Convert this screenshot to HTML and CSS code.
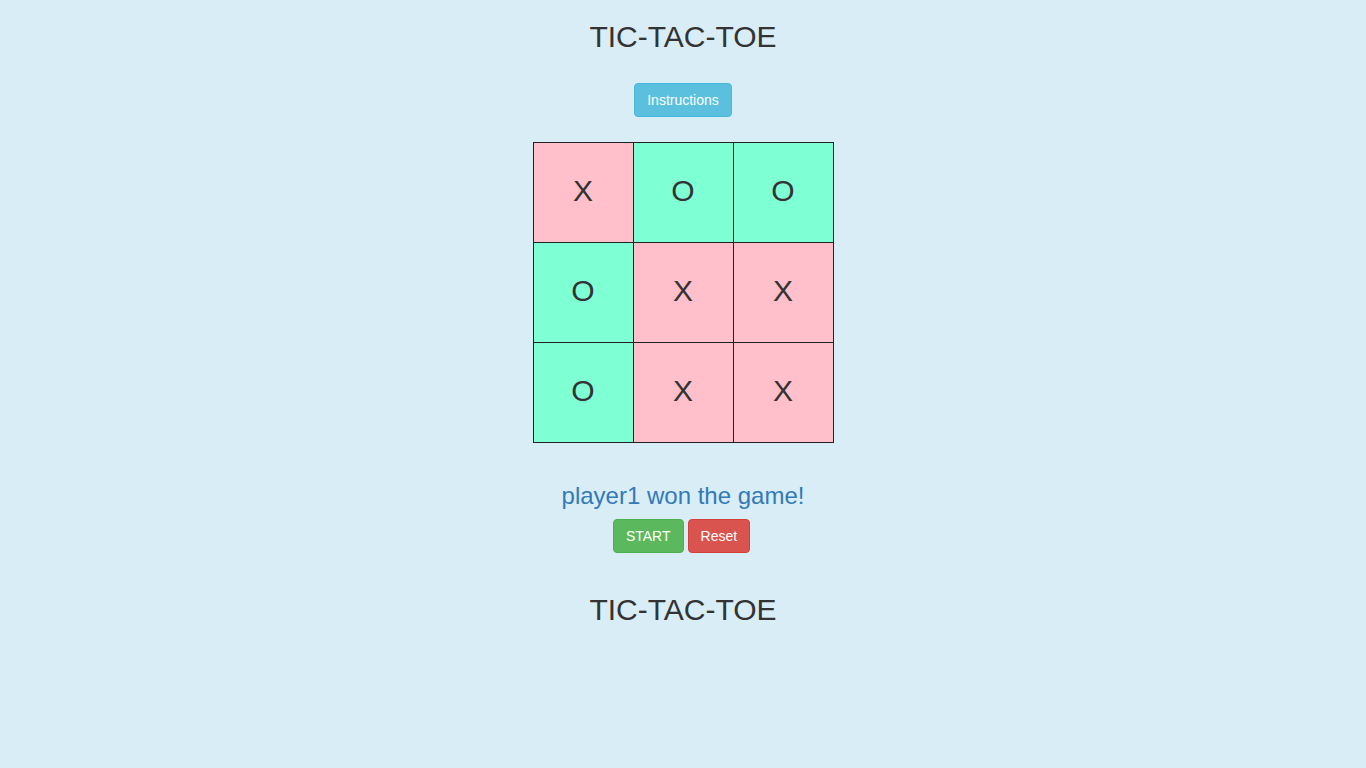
FILE: index.html
```html
<!DOCTYPE html>
<html>
<head>
<meta charset="utf-8">
<link rel="stylesheet" href="styles.css">
</head>
<body>
<div class="page">
  <h2 class="title">TIC-TAC-TOE</h2>
  <button class="btn btn-info">Instructions</button>
  <div class="board">
    <div class="cell x">X</div>
    <div class="cell o">O</div>
    <div class="cell o">O</div>
    <div class="cell o">O</div>
    <div class="cell x">X</div>
    <div class="cell x">X</div>
    <div class="cell o">O</div>
    <div class="cell x">X</div>
    <div class="cell x">X</div>
  </div>
  <h3 class="status">player1 won the game!</h3>
  <div class="actions">
    <button class="btn btn-success">START</button>
    <button class="btn btn-danger">Reset</button>
  </div>
  <h2 class="title title-bottom">TIC-TAC-TOE</h2>
</div>
</body>
</html>
```

FILE: styles.css
```css
html, body {
  margin: 0;
  padding: 0;
  background: #d9edf7;
  font-family: "Liberation Sans", Arial, sans-serif;
  font-size: 14px;
  color: #333;
  min-height: 768px;
}
.page {
  display: flex;
  flex-direction: column;
  align-items: center;
}
.title {
  font-size: 30px;
  font-weight: 400;
  line-height: 33px;
  margin: 20px 0 30px;
  color: #333;
}
.title-bottom {
  margin-top: 40px;
}
.btn {
  font-family: "Liberation Sans", Arial, sans-serif;
  font-size: 14px;
  line-height: 20px;
  padding: 6px 12px;
  border: 1px solid transparent;
  border-radius: 4px;
  color: #fff;
  cursor: pointer;
}
.btn-info {
  background: #5bc0de;
  border-color: #46b8da;
}
.btn-success {
  background: #5cb85c;
  border-color: #4cae4c;
}
.btn-danger {
  background: #d9534f;
  border-color: #d43f3a;
}
.board {
  margin-top: 25px;
  display: grid;
  grid-template-columns: repeat(3, 100px);
  grid-auto-rows: 100px;
  border-left: 1px solid #222;
  border-top: 1px solid #222;
}
.cell {
  border-right: 1px solid #222;
  border-bottom: 1px solid #222;
  display: flex;
  align-items: center;
  justify-content: center;
  padding-bottom: 3px;
  box-sizing: border-box;
  font-size: 30px;
  color: #333;
}
.cell.x { background: #ffc0cb; }
.cell.o { background: #7fffd4; }
.status {
  font-size: 24px;
  font-weight: 400;
  line-height: 26px;
  margin: 40px 0 10px;
  color: #337ab7;
}
.actions {
  display: flex;
  gap: 4px;
  margin-right: 3px;
}
```
